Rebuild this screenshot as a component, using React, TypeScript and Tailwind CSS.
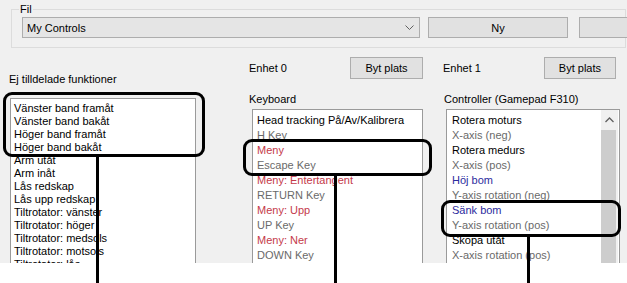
const leftItems = [
  'Vänster band framåt',
  'Vänster band bakåt',
  'Höger band framåt',
  'Höger band bakåt',
  'Arm utåt',
  'Arm inåt',
  'Lås redskap',
  'Lås upp redskap',
  'Tiltrotator: vänster',
  'Tiltrotator: höger',
  'Tiltrotator: medsols',
  'Tiltrotator: motsols',
  'Tiltrotator: lås',
  'Tiltrotator: lås upp',
];

type Item = { text: string; kind: 'fn' | 'red' | 'blue' | 'key' };

const keyboardItems: Item[] = [
  { text: 'Head tracking På/Av/Kalibrera', kind: 'fn' },
  { text: 'H Key', kind: 'key' },
  { text: 'Meny', kind: 'red' },
  { text: 'Escape Key', kind: 'key' },
  { text: 'Meny: Entertangent', kind: 'red' },
  { text: 'RETURN Key', kind: 'key' },
  { text: 'Meny: Upp', kind: 'red' },
  { text: 'UP Key', kind: 'key' },
  { text: 'Meny: Ner', kind: 'red' },
  { text: 'DOWN Key', kind: 'key' },
  { text: 'Meny: Vänster', kind: 'red' },
];

const controllerItems: Item[] = [
  { text: 'Rotera moturs', kind: 'fn' },
  { text: 'X-axis (neg)', kind: 'key' },
  { text: 'Rotera medurs', kind: 'fn' },
  { text: 'X-axis (pos)', kind: 'key' },
  { text: 'Höj bom', kind: 'blue' },
  { text: 'Y-axis rotation (neg)', kind: 'key' },
  { text: 'Sänk bom', kind: 'blue' },
  { text: 'Y-axis rotation (pos)', kind: 'key' },
  { text: 'Skopa utåt', kind: 'fn' },
  { text: 'X-axis rotation (pos)', kind: 'key' },
  { text: 'Skopa inåt', kind: 'fn' },
];

const kindColor = {
  fn: 'text-black',
  red: 'text-[#c4394a]',
  blue: 'text-[#2c2c9e]',
  key: 'text-[#6a6a6a]',
};

function WinButton({ label, className }: { label: string; className: string }) {
  return (
    <div
      className={`flex shrink-0 items-center justify-center border border-[#adadad] bg-[#e1e1e1] text-black ${className}`}
    >
      {label}
    </div>
  );
}

function BindingList({ items, pad }: { items: Item[]; pad: string }) {
  return (
    <div className="flex flex-col pt-[3px]">
      {items.map((it, i) => (
        <div key={i} className={`h-[15px] leading-[15px] whitespace-nowrap ${pad} ${kindColor[it.kind]}`}>
          {it.text}
        </div>
      ))}
    </div>
  );
}

export default function App() {
  return (
    <div
      className="relative w-[627px] h-[283px] overflow-hidden bg-[#f0f0f0] text-[11px] leading-[14px] text-black"
      style={{ fontFamily: '"Liberation Sans", Arial, sans-serif' }}
    >
      <div className="h-[263px] overflow-hidden">
        {/* Fil group */}
        <div className="relative ml-[11px] mt-[9px] w-[615px] h-[39px] border border-[#dcdcdc]">
          <span className="absolute -top-[8px] left-[7px] bg-[#f0f0f0] px-[1px]">Fil</span>
          <div className="flex items-start pl-[10px] pt-[7px]">
            <div className="flex shrink-0 items-center justify-between w-[398px] h-[21px] border border-[#adadad] bg-[#e5e5e5] pl-[4px] pr-[5px]">
              <span>My Controls</span>
              <svg width="9" height="6" viewBox="0 0 9 6" fill="none">
                <polyline points="0.5,0.5 4.5,4.5 8.5,0.5" stroke="#606060" strokeWidth="1" />
              </svg>
            </div>
            <WinButton label="Ny" className="ml-[8px] w-[140px] h-[21px]" />
            <WinButton label="" className="ml-[11px] w-[140px] h-[21px]" />
          </div>
        </div>

        {/* Columns */}
        <div className="flex items-start ml-[9px] mt-[9px]">
          <div className="flex flex-col shrink-0 w-[187px] mt-[15px]">
            <div className="h-[14px] whitespace-nowrap">Ej tilldelade funktioner</div>
            <div className="mt-[12px] ml-[1px] h-[200px] border border-[#9a9a9a] bg-white pt-[3px]">
              {leftItems.map((t) => (
                <div key={t} className="h-[13px] leading-[13px] pl-[3px] whitespace-nowrap">
                  {t}
                </div>
              ))}
            </div>
          </div>

          <div className="flex flex-col shrink-0 w-[174px] ml-[53px]">
            <div className="flex items-center justify-between h-[22px]">
              <span>Enhet 0</span>
              <WinButton label="Byt plats" className="w-[73px] h-[22px]" />
            </div>
            <div className="mt-[13px] h-[14px]">Keyboard</div>
            <div className="mt-[3px] ml-[3px] h-[200px] border border-[#9a9a9a] bg-white">
              <BindingList items={keyboardItems} pad="pl-[4px]" />
            </div>
          </div>

          <div className="flex flex-col shrink-0 w-[177px] ml-[20px]">
            <div className="flex items-center h-[22px]">
              <span>Enhet 1</span>
              <WinButton label="Byt plats" className="ml-[63px] w-[72px] h-[22px]" />
            </div>
            <div className="mt-[13px] h-[14px] pl-[1px] whitespace-nowrap">Controller (Gamepad F310)</div>
            <div className="mt-[3px] ml-[3px] h-[200px] border border-[#9a9a9a] bg-white flex">
              <div className="flex-1 overflow-hidden">
                <BindingList items={controllerItems} pad="pl-[5px]" />
              </div>
              <div className="w-[17px] bg-[#f0f0f0] flex flex-col mr-[1px]">
                <div className="h-[19px] flex items-center justify-center">
                  <svg width="9" height="6" viewBox="0 0 9 6" fill="none">
                    <polyline points="0.5,5 4.5,1 8.5,5" stroke="#606060" strokeWidth="1.3" />
                  </svg>
                </div>
                <div className="mt-[1px] h-[160px] w-[15px] bg-[#cdcdcd]" />
              </div>
            </div>
          </div>
        </div>
      </div>

      {/* annotation strip */}
      <div className="h-[20px] bg-white" />

      {/* callouts */}
      <div className="absolute left-[3px] top-[92px] w-[202px] h-[65px] border-[3px] border-black rounded-[9px]" />
      <div className="absolute left-[96px] top-[156px] w-[3px] h-[127px] bg-black" />
      <div className="absolute left-[243px] top-[139px] w-[189px] h-[37px] border-[3px] border-black rounded-[9px]" />
      <div className="absolute left-[334px] top-[175px] w-[3px] h-[108px] bg-black" />
      <div className="absolute left-[441px] top-[200px] w-[180px] h-[37px] border-[3px] border-black rounded-[9px]" />
      <div className="absolute left-[527px] top-[236px] w-[3px] h-[47px] bg-black" />
    </div>
  );
}
